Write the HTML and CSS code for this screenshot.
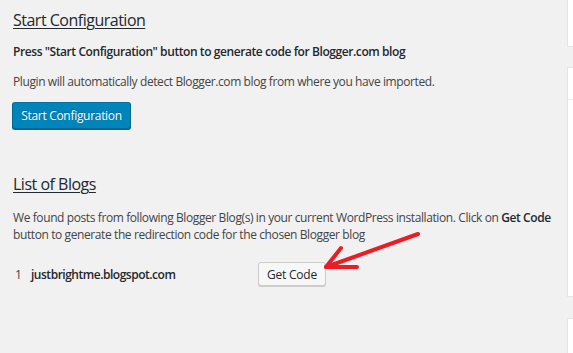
FILE: index.html
```html
<!DOCTYPE html>
<html>
<head>
<meta charset="utf-8">
<link rel="stylesheet" href="styles.css">
</head>
<body>
<div class="page">
  <main class="main">
    <h2 class="title t1">Start Configuration</h2>
    <p class="strong-line">Press "Start Configuration" button to generate code for Blogger.com blog</p>
    <p class="line">Plugin will automatically detect Blogger.com blog from where you have imported.</p>
    <button class="btn-primary">Start Configuration</button>

    <h2 class="title t2">List of Blogs</h2>
    <p class="para">We found posts from following Blogger Blog(s) in your current WordPress installation. Click on <b>Get Code</b> button to generate the redirection code for the chosen Blogger blog</p>
    <div class="blog-row">
      <span class="num">1</span>
      <span class="blog-name">justbrightme.blogspot.com</span>
      <button class="btn">Get Code</button>
    </div>
  </main>
  <aside class="side">
    <div class="box box1"></div>
    <div class="box box2"><div class="box-head"></div></div>
    <div class="box box3"></div>
  </aside>
</div>
<svg class="arrow" width="573" height="353" viewBox="0 0 573 353">
  <g fill="none" stroke="#ed1c24" stroke-width="4" stroke-linecap="round" stroke-linejoin="round">
    <path d="M418 234 L326 267"/>
    <path d="M341 248 L326 267 L357 267"/>
  </g>
</svg>
</body>
</html>
```
FILE: styles.css
```css
html, body {
  margin: 0;
  padding: 0;
  background: #f1f1f1;
}
body {
  font-family: "Open Sans", "Noto Sans", sans-serif;
  color: #444;
  width: 573px;
  height: 353px;
  overflow: hidden;
  position: relative;
}
.page {
  display: flex;
  height: 353px;
}
.main {
  flex: 1;
  padding-left: 13px;
}
.title {
  margin: 0;
  font-size: 16px;
  font-weight: 400;
  line-height: 24px;
  letter-spacing: -0.5px;
  color: #23282d;
  text-decoration: underline;
  text-underline-offset: 2px;
  text-decoration-thickness: 1px;
}
.t1 { margin-top: 8px; }
.strong-line {
  margin: 11px 0 0;
  font-size: 12px;
  font-weight: 600;
  line-height: 18px;
  letter-spacing: -0.42px;
  color: #23282d;
}
.line {
  margin: 12px 0 0;
  font-size: 12px;
  line-height: 18px;
  letter-spacing: -0.4px;
}
.btn-primary {
  display: block;
  margin: 11px 0 0 -1px;
  width: 119px;
  height: 27px;
  padding: 0;
  font-family: inherit;
  font-size: 12px;
  letter-spacing: -0.3px;
  color: #fff;
  background: #0085ba;
  border: 1px solid #0073aa;
  border-color: #0073aa #006799 #006799;
  border-radius: 3px;
  box-shadow: 0 1px 0 #006799;
  text-shadow: 0 -1px 1px #006799;
}
.t2 { margin-top: 43px; }
.para {
  margin: 13px 0 0;
  font-size: 12px;
  line-height: 17px;
  letter-spacing: -0.4px;
  width: 545px;
}
.para b { font-weight: 600; color: #23282d; }
.blog-row {
  margin-top: 19px;
  display: flex;
  align-items: center;
  height: 24px;
}
.num {
  width: 18px;
  padding-left: 2px;
  box-sizing: border-box;
  font-size: 12px;
}
.blog-name {
  width: 227px;
  font-size: 12px;
  font-weight: 600;
  letter-spacing: -0.48px;
  color: #23282d;
}
.btn {
  width: 68px;
  height: 24px;
  padding: 0;
  font-family: inherit;
  font-size: 12px;
  letter-spacing: -0.2px;
  color: #23282d;
  background: #f7f7f7;
  border: 1px solid #ccc;
  border-radius: 3px;
  box-shadow: 0 1px 0 #ccc;
}
.side {
  width: 6px;
  display: flex;
  flex-direction: column;
}
.box {
  background: #fff;
  border-left: 1px solid #e5e5e5;
  box-sizing: border-box;
}
.box1 { height: 47px; border-bottom: 1px solid #e5e5e5; }
.box2 { height: 230px; margin-top: 20px; border-top: 1px solid #e5e5e5; border-bottom: 1px solid #e5e5e5; }
.box-head { height: 31px; border-bottom: 1px solid #eee; }
.box3 { flex: 1; margin-top: 21px; border-top: 1px solid #e5e5e5; }
.arrow {
  position: absolute;
  left: 0;
  top: 0;
  pointer-events: none;
}
```
